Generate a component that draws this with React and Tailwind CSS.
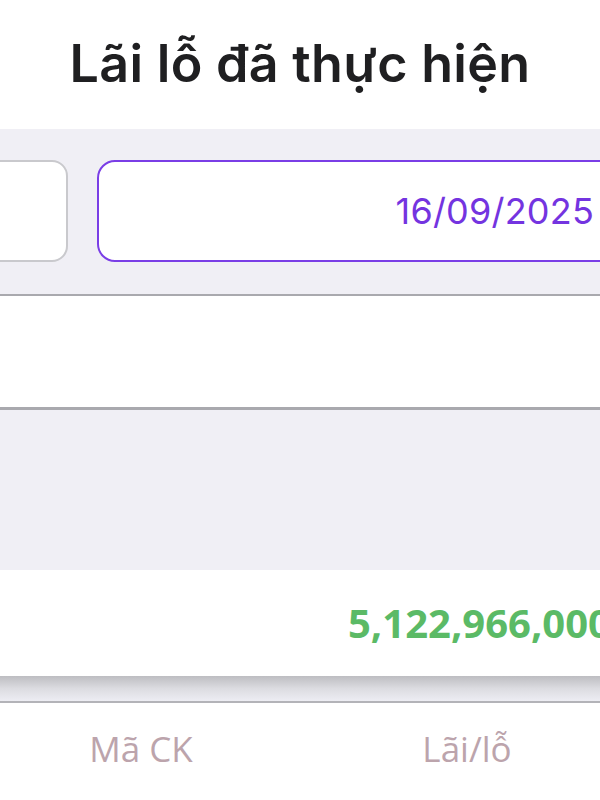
export default function App() {
  return (
    <div className="w-[600px] h-[800px] overflow-hidden bg-white flex flex-col" style={{ fontFamily: "Inter, 'Noto Sans', sans-serif" }}>
      <div className="h-[129px] shrink-0 flex items-center justify-center bg-white pb-[2px]">
        <h1 className="text-[52px] font-semibold text-[#1f1f21] tracking-[0.3px] leading-none whitespace-nowrap" style={{ fontFamily: "Inter, sans-serif" }}>
          Lãi lỗ đã thực hiện
        </h1>
      </div>
      <div className="h-[165px] shrink-0 bg-[#f0eff5] flex items-start pt-[31px] gap-[29px] overflow-hidden">
        <div className="shrink-0 w-[120px] ml-[-52px] h-[102px] rounded-[16px] border-2 border-[#c9c9cd] bg-white" />
        <div className="shrink-0 w-[540px] h-[102px] rounded-[18px] border-[2.5px] border-[#7a3ee6] bg-white flex items-center justify-end pr-[41px]">
          <span className="text-[36px] text-[#7434e0] leading-none tracking-[0.2px]" style={{ fontFamily: "Inter, sans-serif" }}>16/09/2025</span>
        </div>
      </div>
      <div className="h-[2px] shrink-0 bg-[#a9a9ae]" />
      <div className="h-[111px] shrink-0 bg-white" />
      <div className="h-[3px] shrink-0 bg-[#a9a9ae]" />
      <div className="h-[160px] shrink-0 bg-[#f0eff5]" />
      <div className="h-[106px] shrink-0 bg-white flex items-center pl-[348px] overflow-hidden whitespace-nowrap">
        <span className="text-[40px] font-bold text-[#5bba66] leading-none" style={{ fontFamily: "'Open Sans', sans-serif" }}>5,122,966,000</span>
      </div>
      <div className="h-[25px] shrink-0 bg-gradient-to-b from-[#bdbdc1] via-[#dcdce1] to-[#ededf3]" />
      <div className="h-[2px] shrink-0 bg-[#b3b3b8]" />
      <div className="flex-1 bg-white flex pt-[28px] overflow-hidden" style={{ fontFamily: "'Open Sans', sans-serif" }}>
        <div className="shrink-0 w-[282px] text-center text-[35px] text-[#bca4ac] leading-none">Mã CK</div>
        <div className="shrink-0 w-[370px] text-center text-[35px] text-[#bca4ac] leading-none">Lãi/lỗ</div>
      </div>
    </div>
  );
}
